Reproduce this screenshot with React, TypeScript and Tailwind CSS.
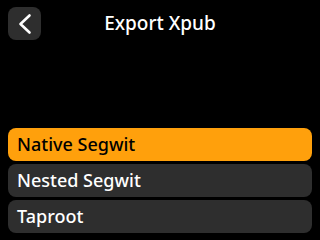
export default function App() {
  const options = ['Native Segwit', 'Nested Segwit', 'Taproot'];
  const selected = 0;

  return (
    <div
      className="w-[320px] h-[240px] bg-black text-white overflow-hidden"
      style={{ fontFamily: '"Noto Sans", "Open Sans", sans-serif' }}
    >
      {/* Header */}
      <div className="relative h-[48px] pt-[7px] px-[8px] flex">
        <button className="w-[33px] h-[33px] rounded-[8px] bg-[#2e2e2e] flex items-center justify-center">
          <svg width="24" height="24" viewBox="0 0 24 24" fill="none">
            <path d="M16.5 3.5 L7.5 12 L16.5 20.5" stroke="white" strokeWidth="2.6" strokeLinecap="round" strokeLinejoin="round" />
          </svg>
        </button>
        <h1 className="absolute left-0 right-0 top-[8px] text-center text-[19px] font-medium leading-[30px] pointer-events-none">
          Export Xpub
        </h1>
      </div>

      {/* Options */}
      <div className="mt-[80px] px-[8px] flex flex-col gap-[3px]">
        {options.map((opt, i) => (
          <div
            key={opt}
            className={`h-[33px] rounded-[8px] pl-[9px] flex items-center text-[18px] font-medium ${
              i === selected ? 'bg-[#ffa00c] text-black' : 'bg-[#2e2e2e] text-white'
            }`}
          >
            {opt}
          </div>
        ))}
      </div>
    </div>
  );
}
